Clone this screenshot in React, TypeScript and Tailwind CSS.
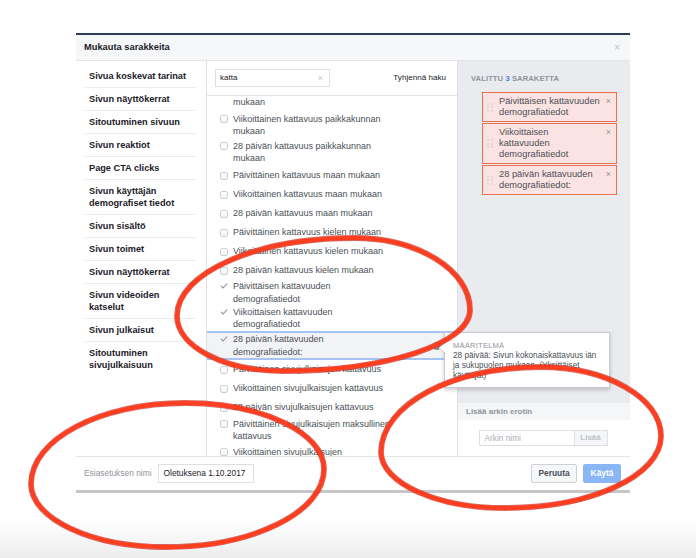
import React from "react";

type Row = { lines: string[]; h: string; checked?: boolean; hl?: boolean; tail?: boolean };

const NAV: string[][] = [
  ["Sivua koskevat tarinat"],
  ["Sivun näyttökerrat"],
  ["Sitoutuminen sivuun"],
  ["Sivun reaktiot"],
  ["Page CTA clicks"],
  ["Sivun käyttäjän", "demografiset tiedot"],
  ["Sivun sisältö"],
  ["Sivun toimet"],
  ["Sivun näyttökerrat"],
  ["Sivun videoiden", "katselut"],
  ["Sivun julkaisut"],
  ["Sitoutuminen", "sivujulkaisuun"],
];

// list is scrolled: only the end of the first item shows
const ROWS: Row[] = [
  { lines: ["mukaan"], h: "h-[16px]", tail: true },
  { lines: ["Viikoittainen kattavuus paikkakunnan", "mukaan"], h: "h-[26px]" },
  { lines: ["28 päivän kattavuus paikkakunnan", "mukaan"], h: "h-[28px]" },
  { lines: ["Päivittäinen kattavuus maan mukaan"], h: "h-[19px]" },
  { lines: ["Viikoittainen kattavuus maan mukaan"], h: "h-[19px]" },
  { lines: ["28 päivän kattavuus maan mukaan"], h: "h-[19px]" },
  { lines: ["Päivittäinen kattavuus kielen mukaan"], h: "h-[19px]" },
  { lines: ["Viikoittainen kattavuus kielen mukaan"], h: "h-[19px]" },
  { lines: ["28 päivän kattavuus kielen mukaan"], h: "h-[19px]" },
  { lines: ["Päivittäisen kattavuuden", "demografiatiedot"], h: "h-[25px]", checked: true },
  { lines: ["Viikoittaisen kattavuuden", "demografiatiedot"], h: "h-[26px]", checked: true },
  { lines: ["28 päivän kattavuuden", "demografiatiedot:"], h: "h-[29px]", checked: true, hl: true },
  { lines: ["Päivittäinen sivujulkaisujen kattavuus"], h: "h-[19px]" },
  { lines: ["Viikoittainen sivujulkaisujen kattavuus"], h: "h-[19px]" },
  { lines: ["28 päivän sivujulkaisujen kattavuus"], h: "h-[19px]" },
  { lines: ["Päivittäinen sivujulkaisujen maksullinen", "kattavuus"], h: "h-[26px]" },
  { lines: ["Viikoittainen sivujulkaisujen"], h: "h-[18px]" },
];

const CHIPS: string[][] = [
  ["Päivittäisen kattavuuden", "demografiatiedot"],
  ["Viikoittaisen", "kattavuuden", "demografiatiedot"],
  ["28 päivän kattavuuden", "demografiatiedot:"],
];

type Pt = [number, number];

// hand drawn loop: left, top, right, bottom points joined with quarter-ellipse curves
function loop(l: Pt, t: Pt, r: Pt, b: Pt) {
  const k = 0.5523;
  const f = (n: number) => n.toFixed(1);
  return [
    `M${f(l[0])} ${f(l[1])}`,
    `C${f(l[0])} ${f(l[1] - k * (l[1] - t[1]))} ${f(t[0] - k * (t[0] - l[0]))} ${f(t[1])} ${f(t[0])} ${f(t[1])}`,
    `C${f(t[0] + k * (r[0] - t[0]))} ${f(t[1])} ${f(r[0])} ${f(r[1] - k * (r[1] - t[1]))} ${f(r[0])} ${f(r[1])}`,
    `C${f(r[0])} ${f(r[1] + k * (b[1] - r[1]))} ${f(b[0] + k * (r[0] - b[0]))} ${f(b[1])} ${f(b[0])} ${f(b[1])}`,
    `C${f(b[0] - k * (b[0] - l[0]))} ${f(b[1])} ${f(l[0])} ${f(l[1] + k * (b[1] - l[1]))} ${f(l[0])} ${f(l[1])}Z`,
  ].join(" ");
}

const LOOPS = [
  loop([177, 316], [354, 238], [470, 310], [282, 371]),
  loop([31, 484], [185, 403], [324, 469], [166, 547]),
  loop([381, 452], [540, 367], [661, 436], [505, 508]),
];

function Check() {
  return (
    <svg width="8" height="8" viewBox="0 0 8 8" fill="none">
      <path d="M1.3 4.2L3.1 6L6.8 1.8" stroke="#8d949e" strokeWidth="1.1" strokeLinecap="round" strokeLinejoin="round" />
    </svg>
  );
}

function Box() {
  return <div className="w-[8px] h-[8px] rounded-[2px] border border-[#ccd0d5] bg-gradient-to-b from-white to-[#f3f4f6]" />;
}

function Dots() {
  return (
    <div className="grid grid-cols-2 gap-[1.5px]">
      {[0, 1, 2, 3, 4, 5].map((i) => (
        <span key={i} className="block w-[2px] h-[2px] rounded-full bg-[#d0d3d8]" />
      ))}
    </div>
  );
}

export default function App() {
  return (
    <div className="relative w-[696px] h-[558px] bg-white overflow-hidden font-['Liberation_Sans',Arial,sans-serif]">
      <div className="pt-[33px] pl-[76px]">
        <div className="w-[554px] bg-white border-t-2 border-t-[#2f3c58] border-b-[3px] border-b-[#c6c6c6]">
          {/* header */}
          <div className="h-[26px] bg-[#f6f7f9] border-b border-[#e5e5e5] flex items-center justify-between pl-[8px] pr-[10px]">
            <span className="text-[9.3px] font-bold text-[#1d2129]">Mukauta sarakkeita</span>
            <span className="text-[10px] text-[#bec2c9] leading-none">×</span>
          </div>

          {/* body */}
          <div className="relative flex h-[395px]">
            <div className="w-[131px] border-r border-[#dddfe2] pl-[9px] pr-[10px] pt-[4px]">
              {NAV.map((n, i) => (
                <div
                  key={i}
                  className={
                    "py-[5px] pl-[4px] leading-[12px] text-[9.2px] font-bold text-[#1d2129] " +
                    (i < NAV.length - 1 ? "border-b border-[#e9ebee]" : "")
                  }
                >
                  {n.map((l) => (
                    <div key={l}>{l}</div>
                  ))}
                </div>
              ))}
            </div>

            <div className="flex-1 flex flex-col min-w-0">
              <div className="h-[35px] shrink-0 border-b border-[#e5e5e5] flex items-center justify-between pl-[8px] pr-[11px]">
                <div className="w-[115px] h-[18px] border border-[#dddfe2] flex items-center justify-between pl-[4px] pr-[6px]">
                  <span className="text-[8px] text-[#1d2129]">katta</span>
                  <span className="text-[9px] text-[#bec2c9] leading-none">×</span>
                </div>
                <span className="text-[8.1px] text-[#1d2129]">Tyhjennä haku</span>
              </div>
              <div className="flex-1 overflow-hidden">
                {ROWS.map((r, i) => (
                  <div
                    key={i}
                    className={
                      "flex pl-[13px] " +
                      r.h +
                      (r.tail ? " items-start" : " items-center") +
                      (r.hl ? " bg-[#f2f3f5] border-y-2 border-[#a6c4f2]" : "")
                    }
                  >
                    <div className="flex items-start">
                      <div className="h-[12.5px] w-[8px] flex items-center">
                        {r.tail ? null : r.checked ? <Check /> : <Box />}
                      </div>
                      <div className="ml-[5px] text-[9px] leading-[12.5px] text-[#4b4f56]">
                        {r.lines.map((l) => (
                          <div key={l}>{l}</div>
                        ))}
                      </div>
                    </div>
                    {r.hl && <div className="ml-auto mr-[16px] w-[8px] h-[8px] rounded-full bg-[#8a8d91]" />}
                  </div>
                ))}
              </div>
            </div>

            <div className="w-[173px] border-l border-[#dddfe2] flex flex-col">
              <div className="h-[342px] bg-[#e9ebee] pt-[13px] pl-[13px]">
                <div className="text-[7.6px] leading-[9px] font-bold text-[#90949c] tracking-[0.1px]">
                  VALITTU <span className="text-[#4080ff]">3</span> SARAKETTA
                </div>
                <div className="mt-[9px] ml-[11px] w-[135px] flex flex-col gap-[1px]">
                  {CHIPS.map((c, i) => (
                    <div
                      key={i}
                      className="flex items-start border border-[#e9704e] bg-[#fbe3e3] py-[3px] pl-[3px] pr-[5px]"
                    >
                      <div className="self-center w-[13px] flex justify-start pl-[1px]">
                        <Dots />
                      </div>
                      <div className="flex-1 text-[9.3px] leading-[11px] text-[#4b4f56]">
                        {c.map((l) => (
                          <div key={l}>{l}</div>
                        ))}
                      </div>
                      <span className="text-[9px] leading-[11px] text-[#90949c]">×</span>
                    </div>
                  ))}
                </div>
              </div>
              <div className="h-[17px] bg-[#f5f6f7] flex items-center pl-[8px] text-[8px] font-bold text-[#90949c]">
                Lisää arkin erotin
              </div>
              <div className="flex-1 flex items-center justify-center pr-[2px]">
                <div className="w-[96px] h-[16px] border border-[#dddfe2] flex items-center pl-[5px] text-[8.3px] text-[#a8adb5]">
                  Arkin nimi
                </div>
                <div className="w-[33px] h-[16px] border border-l-0 border-[#dddfe2] bg-[#f5f6f7] flex items-center justify-center text-[8px] font-bold text-[#bec3c9]">
                  Lisää
                </div>
              </div>
            </div>

            {/* tooltip */}
            <div className="absolute left-[368px] top-[271px] w-[166px] h-[56px] bg-white border border-[#c9ccd1] shadow-[0_2px_4px_rgba(0,0,0,0.2)] pt-[8px] pl-[8px] pr-[6px]">
              <svg className="absolute -left-[7px] top-[9px]" width="8" height="12" viewBox="0 0 8 12">
                <path d="M8 0L1 6L8 12Z" fill="white" />
                <path d="M8 0L1 6L8 12" fill="none" stroke="#c9ccd1" strokeWidth="1" />
              </svg>
              <div className="text-[7.6px] leading-[9.5px] text-[#90949c] tracking-[0.2px]">MÄÄRITELMÄ</div>
              <div className="text-[8.2px] leading-[10px] text-[#4b4f56]">
                28 päivää: Sivun kokonaiskattavuus iän
                <br />
                ja sukupuolen mukaan. (Yksittäiset
                <br />
                käyttäjät)
              </div>
            </div>
          </div>

          {/* footer */}
          <div className="h-[34px] border-t border-[#e5e5e5] flex items-center pl-[8px] pr-[9px]">
            <span className="text-[8.4px] text-[#90949c]">Esiasetuksen nimi</span>
            <div className="ml-[6px] w-[96px] h-[19px] border border-[#dddfe2] flex items-center pl-[5px] text-[8.4px] text-[#1d2129]">
              Oletuksena 1.10.2017
            </div>
            <div className="ml-auto flex gap-[6px]">
              <div className="w-[46px] h-[19px] rounded-[2px] border border-[#ced0d4] bg-[#f6f7f9] flex items-center justify-center text-[8.4px] font-bold text-[#4b4f56]">
                Peruuta
              </div>
              <div className="w-[38px] h-[19px] rounded-[2px] border border-[#8bb6f5] bg-[#8bb6f5] flex items-center justify-center text-[8.4px] font-bold text-white">
                Käytä
              </div>
            </div>
          </div>
        </div>
      </div>

      <div className="mt-[27px] h-[40px] bg-gradient-to-b from-white to-[#ececec]" />

      {/* annotation loops */}
      <svg className="absolute inset-0 pointer-events-none" width="696" height="558" viewBox="0 0 696 558" fill="none">
        {LOOPS.map((d, i) => (
          <g key={i}>
            <path d={d} stroke="#c92a1c" strokeWidth="5.8" strokeOpacity="0.7" />
            <path d={d} stroke="#ff3d1f" strokeWidth="4" />
          </g>
        ))}
      </svg>
    </div>
  );
}
